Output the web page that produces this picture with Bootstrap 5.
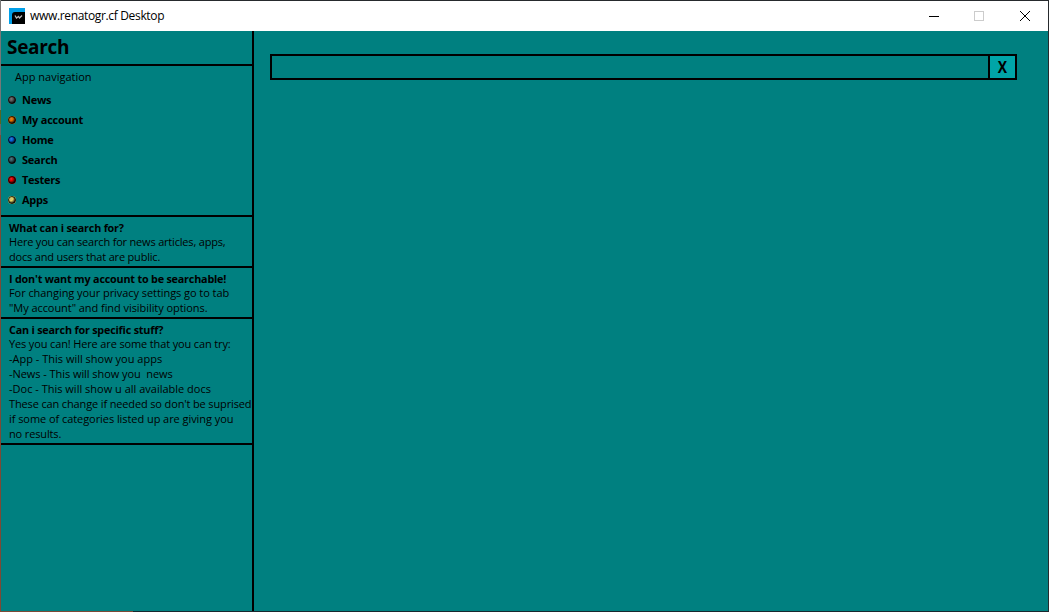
<!DOCTYPE html>
<html lang="en">
<head>
<meta charset="utf-8">
<meta name="viewport" content="width=device-width, initial-scale=1">
<title>www.renatogr.cf Desktop</title>
<link rel="stylesheet" href="https://cdn.jsdelivr.net/npm/bootstrap@5.3.0/dist/css/bootstrap.min.css">
<style>
body{font-family:"Open Sans","Noto Sans",sans-serif;color:#000;font-size:11px;line-height:15px;
 background:linear-gradient(90deg,#7c4a36 133px,#18282e 133px) bottom/100% 1px no-repeat,
 linear-gradient(#777 0 110px,#59651f 110px 124px,#666 124px 135px,#7c4a36 135px) left/1px 100% no-repeat,#262a2d}
.app-window{padding:1px}
.titlebar{height:30px;background:#fff;padding-left:8px}
.caption-text{font-size:12px;margin-left:5px;letter-spacing:-.34px;line-height:16px;padding-bottom:1px}
.win-btn{width:45.5px;height:30px;padding:0;border:0;background:none}
.workspace{background:#008080;min-height:0}
.side{width:253px;border-right:2px solid #000}
.side-head{height:35px;border-bottom:2px solid #000;padding-left:6px;font-size:19px;font-weight:700;line-height:32px;margin:0;letter-spacing:-.3px}
.nav-block{height:151px;border-bottom:2px solid #000}
.nav-head{height:24px;padding:3px 0 0 14px}
.nav-row{height:20px;padding-left:7px;font-weight:700;letter-spacing:-.25px;color:#000;text-decoration:none}
.nav-row span{padding-bottom:2px}
.nav-row svg{margin-right:6px}
.panel{padding:4px 0 2px 8px;border-bottom:2px solid #000}
.panel h2{font-size:10.8px;font-weight:700;line-height:14px;height:13px;margin:0;letter-spacing:-.2px}
.panel div{white-space:pre}
.ls-1{letter-spacing:-.06px}
.ls-2{letter-spacing:-.14px}
.ls-3{letter-spacing:-.19px}
.query{height:26px;margin:23px 31px 0 16px;border:2px solid #000}
.query input{background:transparent;border:0;outline:0;min-width:0}
.query button{width:27px;border:0;border-left:2px solid #000;background:#00a5a8;font-size:16px;font-weight:700;padding:0;line-height:22px}
.query button span{display:inline-block;transform:scaleX(.87)}
</style>
</head>
<body>
<div class="app-window vh-100 d-flex flex-column overflow-hidden">
<header class="titlebar d-flex align-items-center flex-shrink-0">
<svg width="16" height="16" viewBox="0 0 16 16"><path fill="#009fe8" d="M0 0h16v16H0z"/><path fill="#000" d="M3 16V7q0-3 3-3h10v12z"/><path d="M6 7.500l1.500 2.500 2-1.500 1 1.500L13 7.500" fill="none" stroke="#bbb" stroke-width="1.300"/></svg>
<span class="caption-text me-auto">www.renatogr.cf Desktop</span>
<button class="win-btn" aria-label="Minimize"><svg class="d-block mx-auto" width="12" height="12" shape-rendering="crispEdges"><path d="M1 6.500h10" stroke="#000"/></svg></button>
<button class="win-btn" aria-label="Maximize"><svg class="d-block mx-auto" width="12" height="12" shape-rendering="crispEdges"><path d="M.5 1.500h9v9h-9z" fill="none" stroke="#ccc"/></svg></button>
<button class="win-btn" aria-label="Close"><svg class="d-block mx-auto" width="12" height="12"><path d="M1 1l10 10M11 1L1 11" stroke="#000"/></svg></button>
</header>
<div class="workspace d-flex flex-grow-1">
<aside class="side flex-shrink-0">
<h1 class="side-head">Search</h1>
<nav class="nav-block">
<div class="nav-head">App navigation</div>
<svg width="0" height="0" class="position-absolute"><defs><radialGradient id="shine" cx=".38" cy=".35" r=".65"><stop offset="0" stop-color="#fff" stop-opacity=".4"/><stop offset=".35" stop-color="#000" stop-opacity="0"/><stop offset="1" stop-color="#000" stop-opacity=".95"/></radialGradient></defs></svg>
<a class="nav-row d-flex align-items-center"><svg width="8" height="8"><circle cx="4" cy="4" r="4" fill="#606060"/><circle cx="4" cy="4" r="3.500" fill="url(#shine)" stroke="#000" stroke-opacity=".8"/></svg><span>News</span></a>
<a class="nav-row d-flex align-items-center"><svg width="8" height="8"><circle cx="4" cy="4" r="4" fill="#e87400"/><circle cx="4" cy="4" r="3.500" fill="url(#shine)" stroke="#000" stroke-opacity=".8"/></svg><span>My account</span></a>
<a class="nav-row d-flex align-items-center"><svg width="8" height="8"><circle cx="4" cy="4" r="4" fill="#0868e0"/><circle cx="4" cy="4" r="3.500" fill="url(#shine)" stroke="#000" stroke-opacity=".8"/></svg><span>Home</span></a>
<a class="nav-row d-flex align-items-center"><svg width="8" height="8"><circle cx="4" cy="4" r="4" fill="#386068"/><circle cx="4" cy="4" r="3.500" fill="url(#shine)" stroke="#000" stroke-opacity=".8"/></svg><span>Search</span></a>
<a class="nav-row d-flex align-items-center"><svg width="8" height="8"><circle cx="4" cy="4" r="4" fill="#e80000"/><circle cx="4" cy="4" r="3.500" fill="url(#shine)" stroke="#000" stroke-opacity=".8"/></svg><span>Testers</span></a>
<a class="nav-row d-flex align-items-center"><svg width="8" height="8"><circle cx="4" cy="4" r="4" fill="#e8d868"/><circle cx="4" cy="4" r="3.500" fill="url(#shine)" stroke="#000" stroke-opacity=".8"/></svg><span>Apps</span></a>
</nav>
<section class="panel"><h2>What can i search for?</h2>
<div class="ls-3">Here you can search for news articles, apps,</div><div class="ls-3">docs and users that are public.</div></section>
<section class="panel"><h2>I don't want my account to be searchable!</h2>
<div class="ls-1">For changing your privacy settings go to tab</div><div class="ls-1">"My account" and find visibility options.</div></section>
<section class="panel"><h2>Can i search for specific stuff?</h2>
<div class="ls-2">Yes you can! Here are some that you can try:</div><div>-App - This will show you apps</div><div class="ls-1">-News - This will show you  news</div><div>-Doc - This will show u all available docs</div><div class="ls-2">These can change if needed so don't be suprised</div><div class="ls-1">if some of categories listed up are giving you</div><div class="ls-2">no results.</div></section>
</aside>
<main class="flex-grow-1">
<div class="query d-flex"><input class="flex-grow-1" type="text" aria-label="Search"><button><span>X</span></button></div>
</main>
</div>
</div>
<script src="https://cdn.jsdelivr.net/npm/bootstrap@5.3.0/dist/js/bootstrap.bundle.min.js"></script>
</body>
</html>
